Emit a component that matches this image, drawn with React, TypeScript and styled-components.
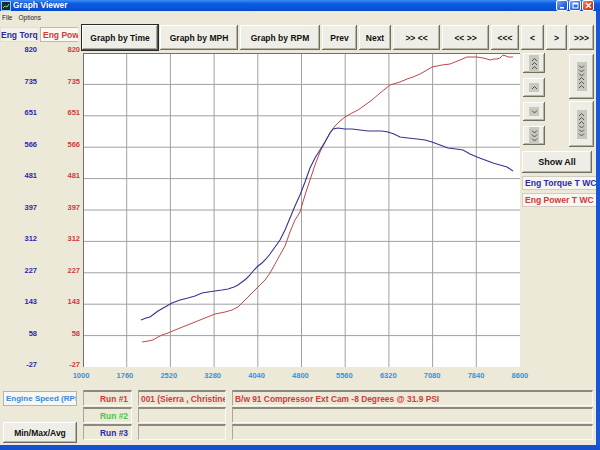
import React from 'react'
import styled, { createGlobalStyle } from 'styled-components'

const GlobalStyle = createGlobalStyle`
  html, body {
    margin: 0;
    padding: 0;
    background: #ece9d8;
  }
  body {
    font-family: 'Liberation Sans', Arial, sans-serif;
  }
  * {
    box-sizing: border-box;
  }
`

const torqueLabels = ['820', '735', '651', '566', '481', '397', '312', '227', '143', '58', '-27']
const rpmLabels = ['1000', '1760', '2520', '3280', '4040', '4800', '5560', '6320', '7080', '7840', '8600']

const toolbar = [
  { label: 'Graph by Time', w: 76, primary: true },
  { label: 'Graph by MPH', w: 78 },
  { label: 'Graph by RPM', w: 80 },
  { label: 'Prev', w: 35 },
  { label: 'Next', w: 32 },
  { label: '>> <<', w: 47 },
  { label: '<< >>', w: 47 },
  { label: '<<<', w: 28 },
  { label: '<', w: 23 },
  { label: '>', w: 21 },
  { label: '>>>', w: 25 },
]

// curve points in page pixels (chart box sits at 83,53)
const torque: [number, number][] = [
  [141, 320], [146, 318], [150, 317], [154, 314], [158, 311], [165, 307], [172, 303],
  [180, 300], [188, 298], [195, 296], [202, 293], [208, 292], [215, 291], [222, 290],
  [228, 289], [234, 287], [238, 285], [242, 282], [246, 279], [250, 275], [254, 270],
  [258, 266], [262, 263], [266, 259], [270, 254], [275, 247], [280, 240], [285, 230],
  [290, 218], [295, 206], [300, 195], [305, 182], [310, 168], [315, 158], [320, 150],
  [325, 142], [330, 133], [333, 129], [338, 128], [345, 129], [352, 129], [360, 130],
  [368, 131], [375, 131], [382, 131], [388, 132], [394, 134], [400, 137], [408, 138],
  [417, 139], [425, 140], [432, 142], [440, 145], [448, 148], [456, 149], [463, 150],
  [470, 154], [477, 157], [485, 160], [493, 163], [500, 165], [507, 167], [513, 171],
]

const power: [number, number][] = [
  [142, 342], [148, 341], [153, 340], [158, 337], [162, 335], [168, 333], [175, 330],
  [185, 326], [195, 322], [205, 318], [215, 314], [225, 312], [232, 310], [238, 307],
  [242, 303], [247, 298], [252, 293], [258, 287], [265, 280], [270, 273], [275, 264],
  [280, 255], [285, 246], [290, 232], [295, 220], [300, 212], [305, 195], [310, 180],
  [315, 165], [320, 152], [325, 142], [330, 133], [335, 126], [340, 121], [345, 117],
  [352, 113], [358, 110], [365, 105], [372, 100], [380, 93], [390, 85], [400, 82],
  [407, 79], [413, 77], [420, 74], [427, 70], [432, 67], [437, 66], [442, 65],
  [450, 64], [455, 62], [460, 60], [467, 57], [472, 57], [477, 57], [483, 58],
  [487, 59], [490, 60], [494, 59], [497, 59], [500, 58], [503, 55], [506, 56],
  [508, 57], [513, 57],
]

const toPath = (pts: [number, number][]) =>
  pts.map((p, i) => `${i ? 'L' : 'M'}${p[0]} ${p[1]}`).join(' ')

type Dir = 'u' | 'd'

const Chevrons = ({ dirs }: { dirs: Dir[] }) => (
  <svg width="7" height={dirs.length * 4 + 1} viewBox={`0 0 7 ${dirs.length * 4 + 1}`}>
    {dirs.map((d, i) => (
      <polyline
        key={i}
        points={
          d === 'u'
            ? `1,${i * 4 + 4} 3.5,${i * 4 + 1.5} 6,${i * 4 + 4}`
            : `1,${i * 4 + 1.5} 3.5,${i * 4 + 4} 6,${i * 4 + 1.5}`
        }
        fill="none"
        stroke="#555"
        strokeWidth="1"
      />
    ))}
  </svg>
)

const App = () => {
  const cols = Array.from({ length: 9 }, (_, i) => 83 + (i + 1) * 43.7)
  const rows = Array.from({ length: 9 }, (_, i) => 53 + (i + 1) * 31.4)

  return (
    <>
      <GlobalStyle />
      <Window>
        <TitleBar>
          <AppIcon>
            <svg width="8" height="8" viewBox="0 0 8 8">
              <rect x="0" y="0" width="8" height="8" fill="#1b2b3a" />
              <polyline points="1,6 3,4 5,5 7,2" fill="none" stroke="#6fe06f" strokeWidth="1" />
            </svg>
          </AppIcon>
          <Title>Graph Viewer</Title>
          <WinButtons>
            <WinBtn>
              <svg width="7" height="7" viewBox="0 0 7 7">
                <rect x="1" y="5" width="4" height="1.5" fill="#fff" />
              </svg>
            </WinBtn>
            <WinBtn>
              <svg width="7" height="7" viewBox="0 0 7 7">
                <rect x="1" y="1" width="5" height="5" fill="none" stroke="#fff" strokeWidth="1" />
                <rect x="1" y="1" width="5" height="1.5" fill="#fff" />
              </svg>
            </WinBtn>
            <WinBtn $close>
              <svg width="7" height="7" viewBox="0 0 7 7">
                <path d="M1 1 L6 6 M6 1 L1 6" stroke="#fff" strokeWidth="1.4" />
              </svg>
            </WinBtn>
          </WinButtons>
        </TitleBar>
        <Frame>
          <MenuBar>
            <MenuItem>File</MenuItem>
            <MenuItem>Options</MenuItem>
          </MenuBar>

          <TopRow>
            <AxisHeaders>
              <AxisHeader $color="#2a2aa6" $bg="#f3f2ea">Eng Torq</AxisHeader>
              <AxisHeader $color="#d03a3a" $bg="#fbf8f2" $boxed>Eng Power</AxisHeader>
            </AxisHeaders>
            <Toolbar>
              {toolbar.map((b) => (
                <ToolButton key={b.label} $w={b.w} $primary={b.primary}>
                  {b.label}
                </ToolButton>
              ))}
            </Toolbar>
          </TopRow>

          <MiddleRow>
            <AxisColumn $color="#2a2aa6" $w={40}>
              {torqueLabels.map((l) => (
                <AxisLabel key={l}>{l}</AxisLabel>
              ))}
            </AxisColumn>
            <AxisColumn $color="#d03a3a" $w={43}>
              {torqueLabels.map((l) => (
                <AxisLabel key={l}>{l}</AxisLabel>
              ))}
            </AxisColumn>
            <ChartBox>
              <svg width="436" height="313" viewBox="84 54 436 313">
                {cols.map((x) => (
                  <line key={x} x1={x} y1={53} x2={x} y2={367} stroke="#a0a0a0" strokeWidth="1" />
                ))}
                {rows.map((y) => (
                  <line key={y} x1={83} y1={y} x2={520} y2={y} stroke="#a0a0a0" strokeWidth="1" />
                ))}
                <path d={toPath(power)} fill="none" stroke="#c04848" strokeWidth="1" />
                <path d={toPath(torque)} fill="none" stroke="#34348e" strokeWidth="1.1" />
              </svg>
            </ChartBox>
            <RightPanel>
              <ArrowGrid>
                <SmallStack>
                  <ArrowButton $h={20}>
                    <ChevBox><Chevrons dirs={['u', 'u', 'u']} /></ChevBox>
                  </ArrowButton>
                  <ArrowButton $h={19}>
                    <ChevBox><Chevrons dirs={['u']} /></ChevBox>
                  </ArrowButton>
                  <ArrowButton $h={19}>
                    <ChevBox><Chevrons dirs={['d']} /></ChevBox>
                  </ArrowButton>
                  <ArrowButton $h={19}>
                    <ChevBox><Chevrons dirs={['d', 'd', 'd']} /></ChevBox>
                  </ArrowButton>
                </SmallStack>
                <LargeStack>
                  <ArrowButton $h={45}>
                    <ChevBox><Chevrons dirs={['d', 'd', 'd', 'u', 'u', 'u']} /></ChevBox>
                  </ArrowButton>
                  <ArrowButton $h={46}>
                    <ChevBox><Chevrons dirs={['u', 'u', 'u', 'd', 'd', 'd']} /></ChevBox>
                  </ArrowButton>
                </LargeStack>
              </ArrowGrid>
              <ShowAll>Show All</ShowAll>
              <Legend $color="#2a2aa6">Eng Torque T WC</Legend>
              <Legend $color="#d03a3a">Eng Power T WC</Legend>
            </RightPanel>
          </MiddleRow>

          <XLabels>
            {rpmLabels.map((l) => (
              <XLabel key={l}>{l}</XLabel>
            ))}
          </XLabels>

          <BottomPanel>
            <ChannelBox>Engine Speed (RPM)</ChannelBox>
            <Field $color="#d03a3a" $align="right">Run #1</Field>
            <Field $color="#d03a3a">001 (Sierra , Christine)</Field>
            <Field $color="#d03a3a">B/w 91 Compressor Ext Cam -8 Degrees @ 31.9 PSI</Field>

            <Spacer />
            <Field $color="#49c649" $align="right">Run #2</Field>
            <Field />
            <Field />

            <MinMaxButton>Min/Max/Avg</MinMaxButton>
            <Field $color="#2a2aa6" $align="right">Run #3</Field>
            <Field />
            <Field />
          </BottomPanel>
        </Frame>
      </Window>
    </>
  )
}

export default App

const Window = styled.div`
  width: 600px;
  height: 450px;
  display: flex;
  flex-direction: column;
  background: #ece9d8;
  overflow: hidden;
`

const TitleBar = styled.div`
  height: 11px;
  display: flex;
  align-items: center;
  padding: 0 6px 0 2px;
  background: linear-gradient(#3d8bf2 0%, #0b5ae0 35%, #0954da 75%, #0848c6 100%);
  color: #fff;
`

const AppIcon = styled.div`
  width: 8px;
  height: 8px;
  display: flex;
  margin-right: 3px;
  outline: 1px solid #9fc3f5;
`

const Title = styled.div`
  flex: 1;
  font-size: 8.5px;
  font-weight: bold;
  line-height: 11px;
  text-shadow: 1px 0 0 #0a3a9c;
`

const WinButtons = styled.div`
  display: flex;
  gap: 1px;
`

const WinBtn = styled.div<{ $close?: boolean }>`
  width: 12px;
  height: 11px;
  border: 1px solid #fff;
  border-radius: 2px;
  display: flex;
  align-items: center;
  justify-content: center;
  background: ${(p) =>
    p.$close
      ? 'linear-gradient(135deg, #f08a6a, #d8421e 60%, #b83012)'
      : 'linear-gradient(135deg, #7aa8f8, #2c66e2 60%, #1f52cc)'};
`

const Frame = styled.div`
  flex: 1;
  display: flex;
  flex-direction: column;
  border-right: 4px solid #1657d8;
  border-bottom: 5px solid #1450d0;
`

const MenuBar = styled.div`
  height: 12px;
  display: flex;
  align-items: center;
  gap: 6px;
  padding-left: 2px;
`

const MenuItem = styled.span`
  font-size: 6.5px;
  color: #222;
`

const TopRow = styled.div`
  height: 27px;
  display: flex;
  padding-top: 2px;
`

const AxisHeaders = styled.div`
  width: 82px;
  display: flex;
  gap: 2px;
  padding-top: 2px;
`

const AxisHeader = styled.div<{ $color: string; $bg: string; $boxed?: boolean }>`
  width: 38px;
  height: 15px;
  overflow: hidden;
  white-space: nowrap;
  font-size: 8.5px;
  font-weight: bold;
  line-height: 14px;
  padding-left: ${(p) => (p.$boxed ? '2px' : '0')};
  color: ${(p) => p.$color};
  background: ${(p) => p.$bg};
  border: 1px solid ${(p) => (p.$boxed ? '#bdbab0' : '#e2dfd3')};
  border-right: none;
`

const Toolbar = styled.div`
  flex: 1;
  display: flex;
  gap: 2px;
`

const ToolButton = styled.div<{ $w: number; $primary?: boolean }>`
  width: ${(p) => p.$w}px;
  height: 25px;
  display: flex;
  align-items: center;
  justify-content: center;
  white-space: nowrap;
  font-size: 8.5px;
  font-weight: bold;
  color: #111;
  background: #efeee6;
  box-shadow: ${(p) =>
    p.$primary
      ? '0 0 0 1px #2a2a2a, inset -1px -1px 0 #555, inset 1px 1px 0 #fff, inset -2px -2px 0 #a8a699'
      : 'inset -1px -1px 0 #716f64, inset 1px 1px 0 #fff, inset -2px -2px 0 #b5b2a6'};
`

const MiddleRow = styled.div`
  height: 314px;
  margin-top: 3px;
  display: flex;
`

const AxisColumn = styled.div<{ $color: string; $w: number }>`
  width: ${(p) => p.$w}px;
  margin: -8px 0 -3px;
  padding-right: 3px;
  display: flex;
  flex-direction: column;
  justify-content: space-between;
  align-items: flex-end;
  color: ${(p) => p.$color};
`

const AxisLabel = styled.div`
  height: 10px;
  line-height: 10px;
  font-size: 7.5px;
  font-weight: bold;
`

const ChartBox = styled.div`
  width: 437px;
  height: 314px;
  background: #fff;
  border-left: 1px solid #6f6f6f;
  border-top: 1px solid #6f6f6f;
  display: flex;
`

const RightPanel = styled.div`
  flex: 1;
  padding-left: 2px;
  display: flex;
  flex-direction: column;
  min-width: 0;
`

const ArrowGrid = styled.div`
  display: flex;
  gap: 24px;
  padding-left: 1px;
`

const SmallStack = styled.div`
  width: 22px;
  display: flex;
  flex-direction: column;
  gap: 5px;
`

const LargeStack = styled.div`
  width: 25px;
  display: flex;
  flex-direction: column;
  gap: 2px;
  padding-top: 1px;
`

const ArrowButton = styled.div<{ $h: number }>`
  height: ${(p) => p.$h}px;
  display: flex;
  align-items: center;
  justify-content: center;
  background: #efeee6;
  box-shadow: inset -1px -1px 0 #716f64, inset 1px 1px 0 #fff, inset -2px -2px 0 #b5b2a6;
`

const ChevBox = styled.div`
  width: 10px;
  padding: 2px 0;
  display: flex;
  justify-content: center;
  background: #c9c8bf;
`

const ShowAll = styled.div`
  width: 70px;
  height: 22px;
  margin-top: 4px;
  display: flex;
  align-items: center;
  justify-content: center;
  font-size: 9px;
  font-weight: bold;
  color: #111;
  background: #efeee6;
  box-shadow: inset -1px -1px 0 #716f64, inset 1px 1px 0 #fff, inset -2px -2px 0 #b5b2a6;
`

const Legend = styled.div<{ $color: string }>`
  height: 14px;
  margin-top: 3px;
  padding-left: 2px;
  line-height: 13px;
  font-size: 8.6px;
  font-weight: bold;
  white-space: nowrap;
  overflow: hidden;
  color: ${(p) => p.$color};
  background: #f7f6f1;
  border: 1px solid #cfccc0;
  border-right: none;
`

const XLabels = styled.div`
  height: 18px;
  width: 540px;
  padding-left: 61px;
  display: flex;
  justify-content: space-between;
`

const XLabel = styled.div`
  width: 40px;
  text-align: center;
  line-height: 18px;
  font-size: 7.5px;
  font-weight: bold;
  color: #3791d8;
`

const BottomPanel = styled.div`
  flex: 1;
  display: grid;
  grid-template-columns: 74px 49px 88px 361px;
  grid-template-rows: 16px 16px 16px;
  column-gap: 6px;
  row-gap: 1px;
  padding: 5px 0 0 3px;
`

const Field = styled.div<{ $color?: string; $align?: 'left' | 'right' }>`
  overflow: hidden;
  white-space: nowrap;
  font-size: 8.4px;
  font-weight: bold;
  line-height: 15px;
  padding: 0 3px 0 2px;
  text-align: ${(p) => p.$align || 'left'};
  color: ${(p) => p.$color || '#000'};
  background: #ece9d8;
  border-top: 2px solid #8c8a80;
  border-left: 1px solid #a9a79c;
  border-bottom: 1px solid #fbfaf5;
  border-right: 1px solid #fbfaf5;
`

const ChannelBox = styled.div`
  height: 15px;
  margin-top: 1px;
  overflow: hidden;
  white-space: nowrap;
  font-size: 8px;
  font-weight: bold;
  line-height: 13px;
  padding-left: 2px;
  color: #3589d8;
  background: #f6f6f2;
  border: 1px solid #b6b3a8;
`

const Spacer = styled.div``

const MinMaxButton = styled.div`
  height: 21px;
  margin-top: -2px;
  display: flex;
  align-items: center;
  justify-content: center;
  font-size: 8.5px;
  font-weight: bold;
  color: #111;
  background: #efeee6;
  box-shadow: inset -1px -1px 0 #716f64, inset 1px 1px 0 #fff, inset -2px -2px 0 #b5b2a6;
`
